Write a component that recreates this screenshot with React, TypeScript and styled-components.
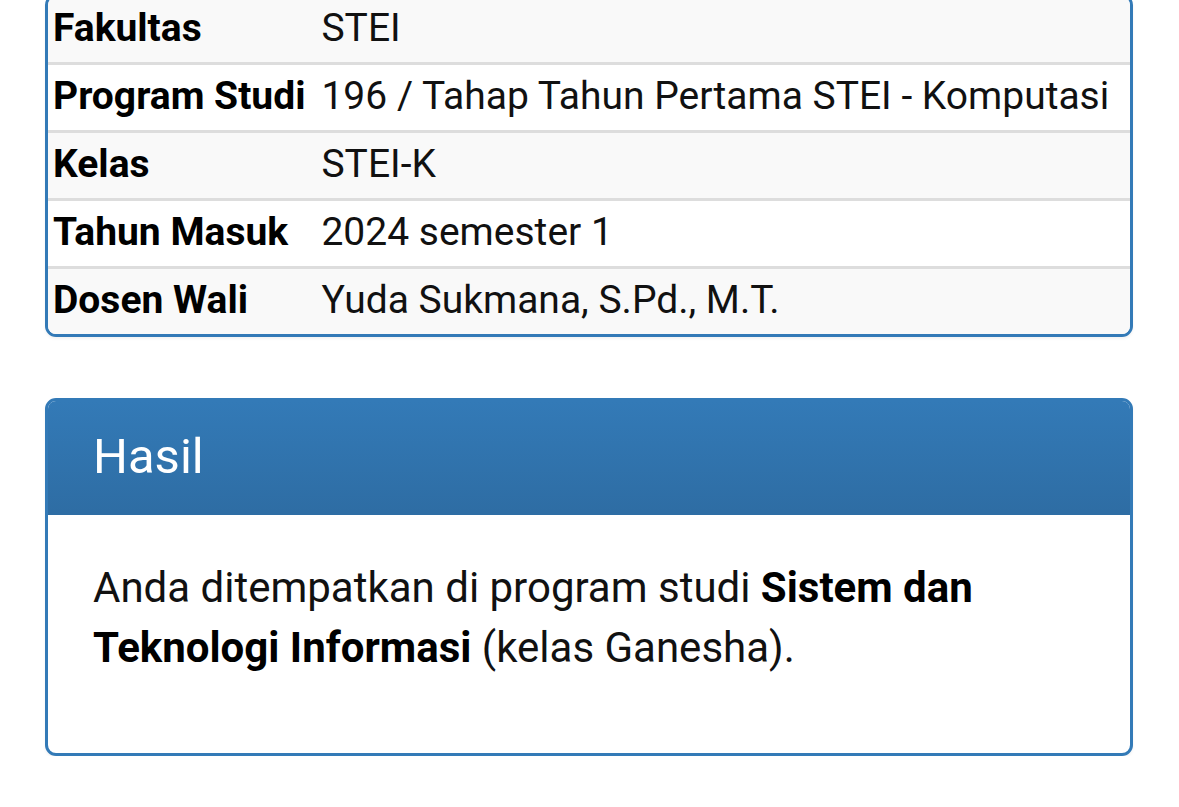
import React from "react";
import styled, { createGlobalStyle } from "styled-components";

const GlobalStyle = createGlobalStyle`
  html, body {
    margin: 0;
    padding: 0;
    background: #ffffff;
    overflow: hidden;
  }
  body {
    font-family: Roboto, "Noto Sans", "Liberation Sans", sans-serif;
    color: #111;
  }
`;

const Page = styled.div`
  padding: 0 46px 0 45px;
  display: flex;
  flex-direction: column;
  gap: 61px;
`;

const Panel = styled.section<{ $offsetTop?: number }>`
  border: 3px solid #337ab7;
  border-radius: 11px;
  background: #ffffff;
  overflow: hidden;
  box-shadow: 0 2px 3px rgba(0, 0, 0, 0.05);
  margin-top: ${(p) => (p.$offsetTop ? `${p.$offsetTop}px` : "0")};
`;

const InfoTable = styled.table`
  width: 100%;
  border-collapse: collapse;
  font-size: 39px;
  line-height: 47px;
`;

const Row = styled.tr<{ $striped: boolean; $first: boolean }>`
  background: ${(p) => (p.$striped ? "#f9f9f9" : "#ffffff")};
  border-top: ${(p) => (p.$first ? "0" : "3px solid #dddddd")};
`;

const Label = styled.th`
  width: 1%;
  white-space: nowrap;
  text-align: left;
  font-weight: 700;
  color: #000;
  padding: 8px 6px 10px 5px;
`;

const Value = styled.td`
  color: #111;
  font-weight: 400;
  white-space: nowrap;
  padding: 8px 6px 10px 10px;
`;

const Heading = styled.header`
  background: linear-gradient(to bottom, #337ab7 0%, #2e6da4 100%);
  border-bottom: 3px solid #2e6da4;
  padding: 29px 45px;
`;

const Title = styled.h3`
  margin: 0;
  color: #ffffff;
  font-size: 49px;
  line-height: 53px;
  font-weight: 400;
`;

const Body = styled.div`
  padding: 43px 45px 75px 45px;
`;

const Message = styled.p`
  margin: 0;
  font-size: 42px;
  line-height: 60px;
  color: #111;
  max-width: 960px;
`;

const Strong = styled.strong`
  font-weight: 700;
  color: #000;
`;

const rows: [string, string][] = [
  ["Fakultas", "STEI"],
  ["Program Studi", "196 / Tahap Tahun Pertama STEI - Komputasi"],
  ["Kelas", "STEI-K"],
  ["Tahun Masuk", "2024 semester 1"],
  ["Dosen Wali", "Yuda Sukmana, S.Pd., M.T."],
];

export default function App() {
  return (
    <>
      <GlobalStyle />
      <Page>
        <Panel $offsetTop={-6}>
          <InfoTable>
            <tbody>
              {rows.map(([k, v], i) => (
                <Row key={k} $striped={i % 2 === 0} $first={i === 0}>
                  <Label>{k}</Label>
                  <Value>{v}</Value>
                </Row>
              ))}
            </tbody>
          </InfoTable>
        </Panel>
        <Panel>
          <Heading>
            <Title>Hasil</Title>
          </Heading>
          <Body>
            <Message>
              Anda ditempatkan di program studi <Strong>Sistem dan</Strong>{" "}
              <Strong>Teknologi Informasi</Strong> (kelas Ganesha).
            </Message>
          </Body>
        </Panel>
      </Page>
    </>
  );
}
